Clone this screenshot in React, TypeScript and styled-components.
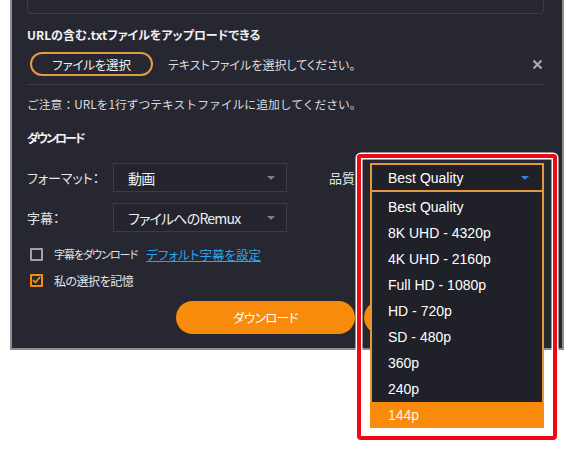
import styled, { createGlobalStyle } from "styled-components";
import { FC } from "react";

const GlobalStyle = createGlobalStyle`
	html, body {
		margin: 0;
		padding: 0;
		background: #ffffff;
	}
	body {
		min-height: 452px;
		font-family: "Noto Sans CJK JP", "Liberation Sans", sans-serif;
		font-feature-settings: "palt";
	}
	#root {
		min-height: 452px;
	}
`;

const qualities = [
	"Best Quality",
	"8K UHD - 4320p",
	"4K UHD - 2160p",
	"Full HD - 1080p",
	"HD - 720p",
	"SD - 480p",
	"360p",
	"240p",
	"144p",
];

const ORANGE = "#f98b0c";

const App: FC = () => {
	return (
		<>
			<GlobalStyle />
			<Panel>
				<UrlBox />
				<Title>URLの含む.txtファイルをアップロードできる</Title>
				<FileRow>
					<FileButton>ファイルを選択</FileButton>
					<FileHint>テキストファイルを選択してください。</FileHint>
					<svg width='11' height='11' viewBox='0 0 11 11'>
						<path d='M1.5 1.5 L9.5 9.5 M9.5 1.5 L1.5 9.5' stroke='#a9a9ae' strokeWidth='2.2' />
					</svg>
				</FileRow>
				<Notice>ご注意：URLを1行ずつテキストファイルに追加してください。</Notice>
				<Heading>ダウンロード</Heading>

				<FieldRow $gap={15}>
					<Label>フォーマット：</Label>
					<Select>
						動画
						<Caret />
					</Select>
					<QualityLabel>品質</QualityLabel>
					<QualityWrap>
						<OpenSelect>
							Best Quality
							<Caret $open />
						</OpenSelect>
						<OptionList>
							{qualities.map((q, i) => (
								<Option key={q} $active={i === qualities.length - 1}>
									{q}
								</Option>
							))}
						</OptionList>
						<Highlight />
					</QualityWrap>
				</FieldRow>

				<FieldRow $gap={11}>
					<Label>字幕：</Label>
					<Select>
						ファイルへのRemux
						<Caret />
					</Select>
				</FieldRow>

				<CheckRow $gap={12}>
					<Box />
					<CheckText $tight>字幕をダウンロード</CheckText>
					<LinkText>デフォルト字幕を設定</LinkText>
				</CheckRow>
				<CheckRow $gap={6}>
					<Box $checked>
						<svg width='9' height='8' viewBox='0 0 9 8'>
							<path d='M1 4 L3.5 6.5 L8 1.2' fill='none' stroke={ORANGE} strokeWidth='1.8' />
						</svg>
					</Box>
					<CheckText>私の選択を記憶</CheckText>
				</CheckRow>

				<ButtonRow>
					<PrimaryButton>ダウンロード</PrimaryButton>
					<PrimaryButton aria-label='ダウンロード' />
				</ButtonRow>
			</Panel>
		</>
	);
};

export default App;

const Panel = styled.div`
	position: relative;
	box-sizing: border-box;
	width: 554px;
	margin: -30px 0 0 10px;
	padding: 0 18px 14px 15px;
	background: #262731;
	border: 2px solid #8d8d90;
	border-top: none;
	color: #e4e4e6;
	font-size: 12px;
`;

const UrlBox = styled.div`
	height: 44px;
	box-sizing: border-box;
	border: 1px solid #3b3c48;
	border-radius: 4px;
`;

const Title = styled.div`
	margin-top: 11px;
	line-height: 20px;
	font-size: 12px;
	font-weight: 700;
	color: #f2f2f2;
`;

const Heading = styled(Title)`
	margin-top: 14px;
	letter-spacing: -2px;
`;

const FileRow = styled.div`
	display: flex;
	align-items: center;
	margin-top: 7px;
	padding: 0 1px 8px 0;
	border-bottom: 1px solid #3a3b46;
`;

const FileButton = styled.div`
	box-sizing: border-box;
	width: 123px;
	height: 24px;
	margin-left: 3px;
	border: 2px solid #e39a45;
	border-radius: 12px;
	display: flex;
	align-items: center;
	justify-content: center;
	font-size: 12.5px;
	letter-spacing: -0.2px;
	color: #f0f0f0;
`;

const FileHint = styled.span`
	margin-left: 15px;
	flex: 1;
	font-size: 12px;
	color: #dcdcdf;
`;

const Notice = styled.div`
	margin-top: 9px;
	line-height: 20px;
	font-size: 11.8px;
	font-feature-settings: normal;
	color: #dcdcdf;
`;

const FieldRow = styled.div<{ $gap: number }>`
	display: grid;
	grid-template-columns: 86px 174px 83px 174px;
	align-items: center;
	margin-top: ${(p) => p.$gap}px;
	height: 29px;
`;

const Label = styled.span`
	font-size: 13px;
	color: #e4e4e6;
`;

const QualityLabel = styled.span`
	padding-left: 42px;
	font-size: 13px;
	color: #e4e4e6;
`;

const Select = styled.div`
	box-sizing: border-box;
	height: 29px;
	padding: 0 11px 0 14px;
	display: flex;
	align-items: center;
	justify-content: space-between;
	border: 1px solid #3a3b47;
	background: #23242d;
	font-size: 14px;
	letter-spacing: -0.8px;
	color: #f0f0f0;
`;

const Caret = styled.span<{ $open?: boolean }>`
	width: 0;
	height: 0;
	border-left: 4px solid transparent;
	border-right: 4px solid transparent;
	border-top: 4px solid ${(p) => (p.$open ? "#3b7fdc" : "#7d7e88")};
`;

const QualityWrap = styled.div`
	position: relative;
	height: 29px;
`;

const OpenSelect = styled.div`
	box-sizing: border-box;
	height: 29px;
	padding: 0 13px 0 16px;
	display: flex;
	align-items: center;
	justify-content: space-between;
	border: 2px solid #e6963c;
	background: #1f2028;
	font-family: "Liberation Sans", Arial, sans-serif;
	font-size: 14px;
	color: #ffffff;
	position: relative;
	z-index: 2;
`;

const OptionList = styled.div`
	position: absolute;
	left: 0;
	right: 0;
	top: 29px;
	z-index: 2;
	box-sizing: border-box;
	padding-top: 2px;
	background: #1f2028;
	border-left: 2px solid #e6963c;
	border-right: 2px solid #e6963c;
	font-family: "Liberation Sans", Arial, sans-serif;
	font-size: 14px;
	color: #ffffff;
`;

const Option = styled.div<{ $active?: boolean }>`
	height: 26px;
	line-height: 26px;
	padding-left: ${(p) => (p.$active ? 18 : 16)}px;
	margin: 0 ${(p) => (p.$active ? -2 : 0)}px;
	background: ${(p) => (p.$active ? ORANGE : "transparent")};
	color: ${(p) => (p.$active ? "#fff3e0" : "#ffffff")};
`;

const Highlight = styled.div`
	position: absolute;
	left: -13px;
	top: -9px;
	width: 200px;
	height: 286px;
	box-sizing: border-box;
	border: 4px solid #ee0a12;
	border-radius: 4px;
	box-shadow: 0 0 0 1.5px #ffffff, inset 0 0 0 1.5px #ffffff;
	z-index: 3;
	pointer-events: none;
`;

const CheckRow = styled.div<{ $gap: number }>`
	display: flex;
	align-items: center;
	height: 20px;
	margin-top: ${(p) => p.$gap}px;
	padding-left: 3px;
	font-size: 12px;
	color: #e4e4e6;
`;

const CheckText = styled.span<{ $tight?: boolean }>`
	margin-left: 11px;
	font-size: ${(p) => (p.$tight ? 11 : 12)}px;
	letter-spacing: ${(p) => (p.$tight ? -1 : -0.5)}px;
`;

const Box = styled.span<{ $checked?: boolean }>`
	box-sizing: border-box;
	width: 13px;
	height: 13px;
	display: flex;
	align-items: center;
	justify-content: center;
	border: 2px solid ${(p) => (p.$checked ? ORANGE : "#a2a2a8")};
	border-radius: 1px;
`;

const LinkText = styled.a`
	margin-left: 9px;
	color: #2ea3ea;
	text-decoration: underline;
	font-size: 12.5px;
`;

const ButtonRow = styled.div`
	display: flex;
	justify-content: flex-end;
	gap: 9px;
	margin-top: 11px;
	padding-right: 1px;
`;

const PrimaryButton = styled.button`
	width: 179px;
	height: 33px;
	border: none;
	border-radius: 17px;
	background: ${ORANGE};
	color: #ffffff;
	font-family: "Noto Sans CJK JP", sans-serif;
	font-feature-settings: "palt";
	font-size: 12.5px;
	letter-spacing: -0.5px;
`;
